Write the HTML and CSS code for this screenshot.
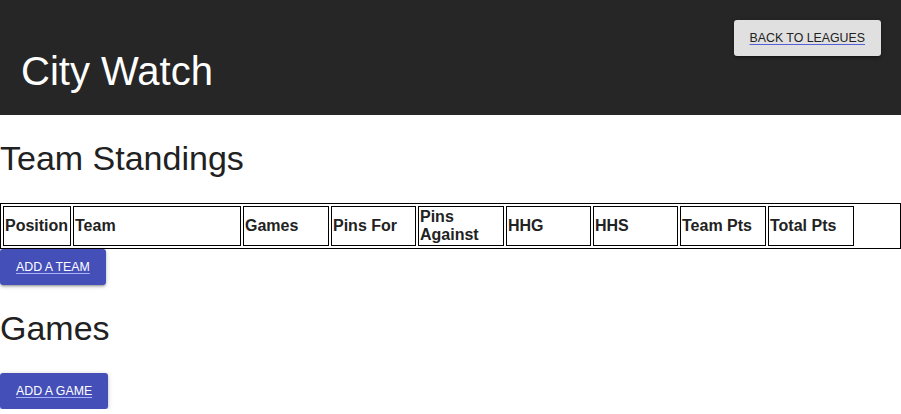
FILE: index.html
```html
<!DOCTYPE html>
<html lang="en">
<head>
<meta charset="utf-8">
<title>City Watch</title>
<link rel="stylesheet" href="styles.css">
</head>
<body>
<header class="topbar">
  <h1 class="league-title">City Watch</h1>
  <a class="btn btn-light" href="#">Back to Leagues</a>
</header>
<main>
  <h2 class="section-title">Team Standings</h2>
  <table class="standings">
    <thead>
      <tr>
        <th class="c-pos">Position</th>
        <th class="c-team">Team</th>
        <th class="c-86">Games</th>
        <th class="c-85">Pins For</th>
        <th class="c-86">Pins Against</th>
        <th class="c-85">HHG</th>
        <th class="c-85">HHS</th>
        <th class="c-86">Team Pts</th>
        <th class="c-86">Total Pts</th>
        <th class="c-rest"></th>
      </tr>
    </thead>
  </table>
  <a class="btn btn-primary" href="#">Add a Team</a>
  <h2 class="section-title">Games</h2>
  <a class="btn btn-primary" href="#">Add a Game</a>
</main>
</body>
</html>
```
FILE: styles.css
```css
html, body {
  margin: 0;
  padding: 0;
}
body {
  font-family: "Liberation Sans", Arial, sans-serif;
  color: #212121;
  background: #fff;
}
.topbar {
  box-sizing: border-box;
  height: 115px;
  background: #262626;
  display: flex;
  justify-content: space-between;
  align-items: flex-start;
  padding: 20px 20px 0 21px;
}
.league-title {
  margin: 28px 0 0;
  font-size: 40px;
  line-height: 46px;
  font-weight: normal;
  color: #fff;
}
.btn {
  display: inline-flex;
  align-items: center;
  box-sizing: border-box;
  height: 36px;
  padding: 0 16px;
  font-size: 12.35px;
  text-transform: uppercase;
  text-decoration: underline;
  text-underline-offset: 2px;
  border-radius: 3px;
  box-shadow: 0 1px 5px rgba(0,0,0,0.2), 0 2px 2px rgba(0,0,0,0.14), 0 3px 1px -2px rgba(0,0,0,0.12);
}
.btn-light {
  background: #e0e0e0;
  color: #222;
  text-decoration-color: #5560d8;
}
.btn-primary {
  background: #454fb8;
  color: #fff;
  text-decoration-color: #aab0f5;
}
.section-title {
  margin: 23px 0 24px;
  font-size: 34px;
  line-height: 41px;
  font-weight: normal;
  color: #212121;
}
.standings {
  width: 100%;
  table-layout: fixed;
  border: 1px solid #000;
  border-spacing: 2px;
  margin: 0;
}
.standings th {
  box-sizing: border-box;
  border: 1px solid #000;
  padding: 1px;
  font-size: 16px;
  line-height: 18px;
  font-weight: bold;
  text-align: left;
  vertical-align: middle;
  color: #222;
}
.standings th.c-rest {
  border: none;
}
.c-pos { width: 68px; }
.c-team { width: 168px; }
.c-86 { width: 86px; }
.c-85 { width: 85px; }
```
